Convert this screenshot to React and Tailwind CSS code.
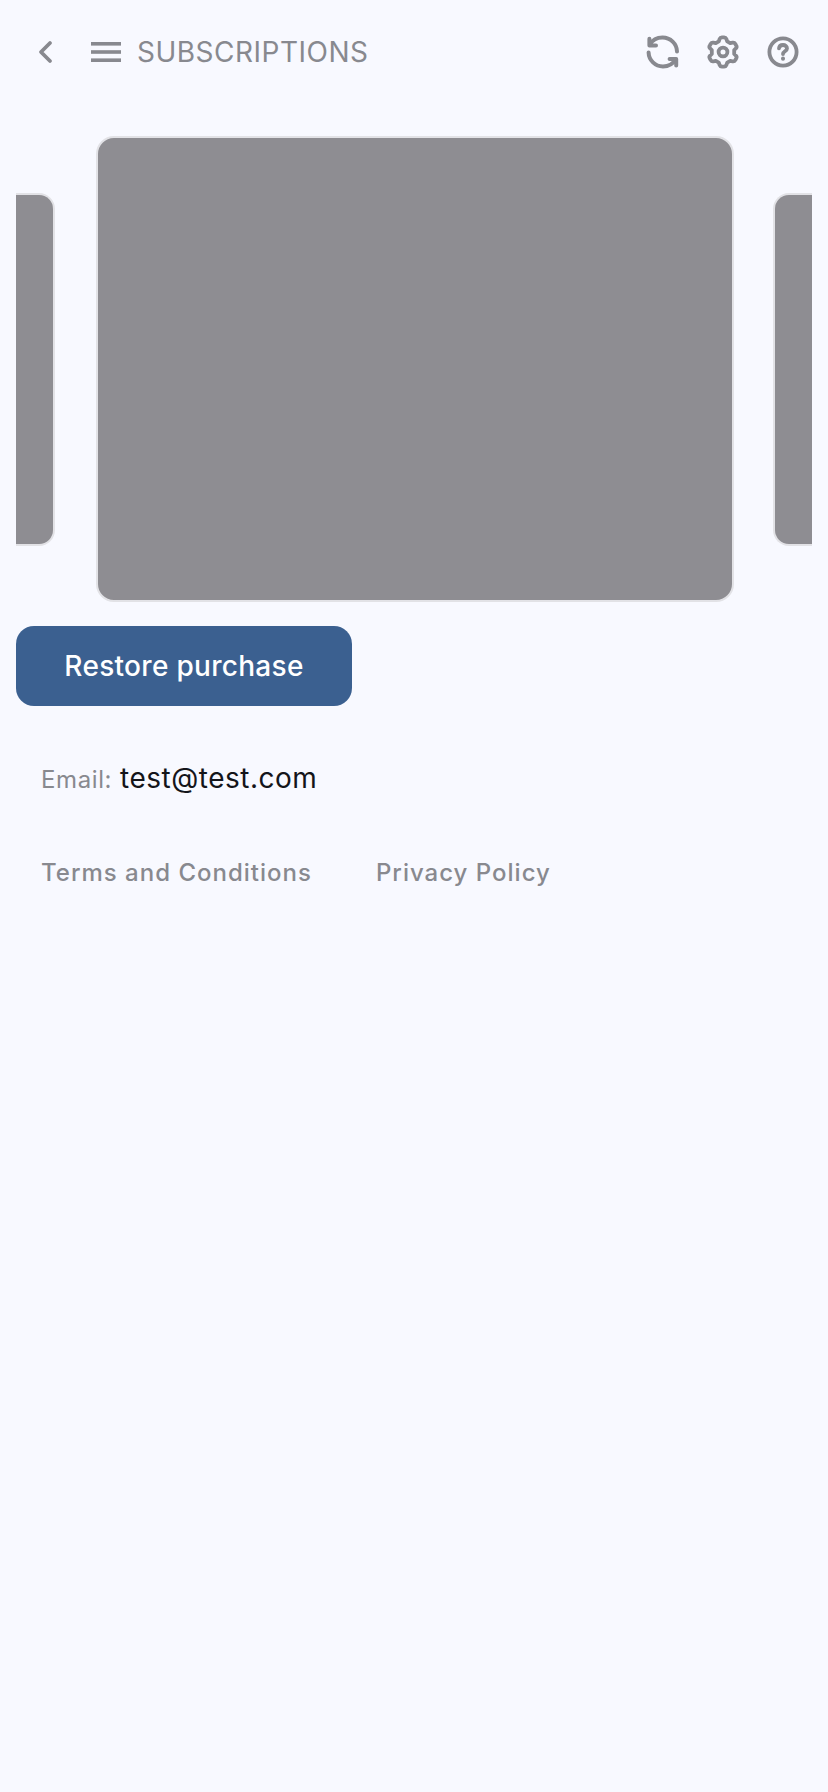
import React from "react";

const Card = ({ className }) => (
  <div
    className={`shrink-0 bg-[#8e8d92] border-2 border-[#e2e2e6] ${className}`}
  />
);

const Refresh = () => (
  <svg width="36" height="36" viewBox="0 0 36 36" fill="none" stroke="#88898f" strokeWidth="4" strokeLinecap="round" strokeLinejoin="round">
    <path d="M5 10.5 C7.5 6 12.2 3.6 17.5 3.6 C25.5 3.6 31.8 9.8 32 17.5" />
    <path d="M4.4 4.8 V11.4 H11" />
    <path d="M3.6 18.5 C3.8 26.2 10.2 32.4 18 32.4 C23.3 32.4 28 29.8 30.6 25.5" />
    <path d="M24.6 25 H31.2 V31.4" />
  </svg>
);

const Gear = () => (
  <svg width="36" height="36" viewBox="0 0 36 36" fill="none" stroke="#88898f" strokeWidth="3.8" strokeLinecap="round" strokeLinejoin="round">
    <path d="M14.6 5 C15 4 15.8 3.4 16.9 3.4 H19.1 C20.2 3.4 21 4 21.4 5 L22.2 7.4 L25.2 9.1 L27.6 8.6 C28.7 8.4 29.7 8.8 30.2 9.8 L31.2 11.5 C31.8 12.4 31.7 13.5 30.9 14.3 L29.2 16 V20 L30.9 21.7 C31.7 22.5 31.8 23.6 31.2 24.5 L30.2 26.2 C29.7 27.2 28.7 27.6 27.6 27.4 L25.2 26.9 L22.2 28.6 L21.4 31 C21 32 20.2 32.6 19.1 32.6 H16.9 C15.8 32.6 15 32 14.6 31 L13.8 28.6 L10.8 26.9 L8.4 27.4 C7.3 27.6 6.3 27.2 5.8 26.2 L4.8 24.5 C4.2 23.6 4.3 22.5 5.1 21.7 L6.8 20 V16 L5.1 14.3 C4.3 13.5 4.2 12.4 4.8 11.5 L5.8 9.8 C6.3 8.8 7.3 8.4 8.4 8.6 L10.8 9.1 L13.8 7.4 Z" />
    <circle cx="18" cy="18" r="4.4" />
  </svg>
);

const Help = () => (
  <svg width="36" height="36" viewBox="0 0 36 36" fill="none" stroke="#88898f" strokeWidth="3.8" strokeLinecap="round" strokeLinejoin="round">
    <circle cx="18" cy="18" r="13.6" />
    <path d="M14 14.4 C14.2 12.2 15.9 11 18 11 C20.3 11 22 12.4 22 14.4 C22 17.2 18 17.4 18 20" />
    <path d="M18 24.6 V24.7" strokeWidth="4" />
  </svg>
);

const App = () => {
  return (
    <div className="min-h-[1792px] bg-[#f8f9ff] font-['Inter',sans-serif]">
      <div className="flex items-center h-[104px] pl-[36px] pr-[27px]">
        <svg width="20" height="24" viewBox="0 0 20 24" fill="none" stroke="#88898f" strokeWidth="3.8" strokeLinecap="round" strokeLinejoin="round">
          <path d="M14 3 L5 12 L14 21" />
        </svg>
        <svg className="ml-[35px]" width="30" height="20" viewBox="0 0 30 20" fill="#88898f">
          <rect x="0" y="0" width="30" height="3.6" />
          <rect x="0" y="8.2" width="30" height="3.6" />
          <rect x="0" y="16.4" width="30" height="3.6" />
        </svg>
        <span className="ml-[16px] text-[28px] leading-none tracking-[0.5px] text-[#88898f]">
          SUBSCRIPTIONS
        </span>
        <div className="ml-auto flex items-center gap-[24px]">
          <Refresh />
          <Gear />
          <Help />
        </div>
      </div>

      <div className="mx-[16px] mt-[32px] flex items-center overflow-hidden">
        <Card className="w-[39px] h-[353px] rounded-r-[16px] border-l-0" />
        <Card className="ml-[41px] w-[638px] h-[466px] rounded-[18px]" />
        <Card className="ml-[39px] w-[39px] h-[353px] rounded-l-[16px] border-r-0" />
      </div>

      <button className="ml-[16px] mt-[24px] w-[336px] h-[80px] rounded-[18px] bg-[#3b6090] text-[28px] font-medium tracking-[0.3px] text-white">
        Restore purchase
      </button>

      <div className="mt-[51px] ml-[41px] flex items-baseline">
        <span className="text-[24px] tracking-[0.6px] text-[#88898f]">Email:</span>
        <span className="ml-[8px] text-[28px] tracking-[0.5px] text-[#14151a]">test@test.com</span>
      </div>

      <div className="mt-[56px] ml-[41px] flex gap-[64px] text-[24px] font-medium tracking-[1px] text-[#88898f]">
        <span>Terms and Conditions</span>
        <span>Privacy Policy</span>
      </div>
    </div>
  );
};

export default App;
